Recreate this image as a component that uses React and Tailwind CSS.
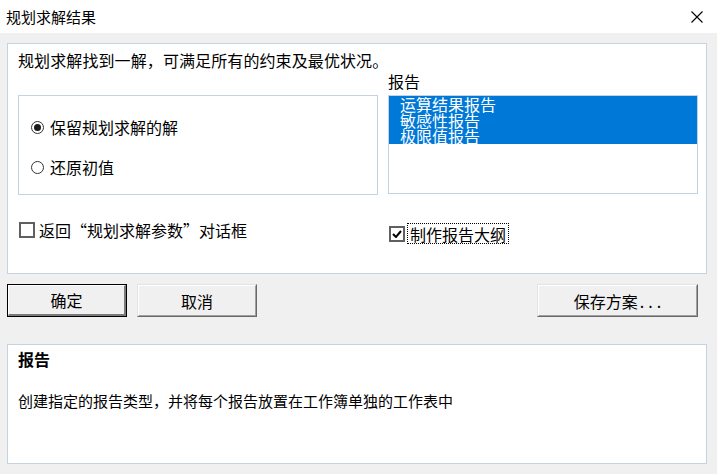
const FONT = "font-['Noto_Sans_CJK_SC','Noto_Sans',sans-serif]";

function Radio({ checked, children }) {
  return (
    <div className="flex items-center h-[16px]">
      <span className="w-[13px] h-[13px] rounded-full border border-[#333] bg-white flex items-center justify-center">
        {checked && <span className="w-[7px] h-[7px] rounded-full bg-[#1a1a1a]" />}
      </span>
      <span className="ml-[6px] text-[16px] leading-[16px]">{children}</span>
    </div>
  );
}

function Checkbox({ checked }) {
  return (
    <span className="w-[16px] h-[16px] border-2 border-[#606060] bg-white flex items-center justify-center shrink-0">
      {checked && (
        <svg width="10" height="8" viewBox="0 0 10 8">
          <path d="M1 4 L4 7 L9 1" stroke="#000" strokeWidth="2" fill="none" />
        </svg>
      )}
    </span>
  );
}

function Btn({ children, isDefault, className = '' }) {
  if (isDefault) {
    return (
      <div className={`h-[33px] flex border border-black ${className}`}>
        <div className="flex-1 flex items-center justify-center bg-[#f0f0f0] border-t border-l border-t-white border-l-white border-b-2 border-r-2 border-b-[#7a7a7a] border-r-[#7a7a7a] text-[16px] leading-[16px]">
          {children}
        </div>
      </div>
    );
  }
  return (
    <div className={`h-[33px] flex border border-t-[#e3e3e3] border-l-[#e3e3e3] border-b-[#696969] border-r-[#696969] ${className}`}>
      <div className="flex-1 flex items-center justify-center bg-[#f0f0f0] border border-t-white border-l-white border-b-[#a0a0a0] border-r-[#a0a0a0] text-[16px] leading-[16px]">
        {children}
      </div>
    </div>
  );
}

export default function App() {
  return (
    <div className={`w-[717px] h-[474px] bg-[#f0f0f0] text-black overflow-hidden ${FONT}`}>
      {/* Title bar */}
      <div className="h-[33px] bg-white flex items-center justify-between pl-[6px] pr-[14px]">
        <span className="text-[15px] leading-[15px]">规划求解结果</span>
        <svg width="12" height="12" viewBox="0 0 12 12">
          <path d="M0.5 0.5 L11.5 11.5 M11.5 0.5 L0.5 11.5" stroke="#000" strokeWidth="1.1" />
        </svg>
      </div>

      <div className="pl-[7px] pr-[10px] pt-[10px]">
        {/* Main panel */}
        <div className="h-[231px] bg-white border border-[#c3d3e3] pl-[10px]">
          <p className="mt-[8px] text-[16px] leading-[16px] tracking-[0.1px]">规划求解找到一解，可满足所有的约束及最优状况。</p>

          <div className="flex items-start gap-[10px] mt-[5px]">
            <div className="w-[360px] h-[100px] mt-[22px] border border-[#c3d3e3] pl-[12px] pt-[23px] flex flex-col gap-[24px]">
              <Radio checked>保留规划求解的解</Radio>
              <Radio>还原初值</Radio>
            </div>
            <div className="w-[310px]">
              <div className="text-[16px] leading-[16px]">报告</div>
              <div className="mt-[6px] h-[99px] border border-[#c3d3e3] bg-white">
                <div className="bg-[#0078d7] text-white pl-[11px] text-[16px] leading-[16px]">
                  <div>运算结果报告</div>
                  <div>敏感性报告</div>
                  <div>极限值报告</div>
                </div>
              </div>
            </div>
          </div>

          <div className="flex items-start mt-[27px]">
            <div className="w-[370px] flex items-center ml-[1px]">
              <Checkbox />
              <span className="ml-[4px] text-[16px] leading-[16px]">返回“规划求解参数”对话框</span>
            </div>
            <div className="flex items-center mt-[1px]">
              <Checkbox checked />
              <span className="ml-[2px] h-[21px] px-[2px] flex items-center border border-dotted border-black text-[16px] leading-[16px]">
                制作报告大纲
              </span>
            </div>
          </div>
        </div>

        {/* Buttons */}
        <div className="flex mt-[10px]">
          <Btn isDefault className="w-[120px]">确定</Btn>
          <Btn className="w-[120px] ml-[10px]">取消</Btn>
          <Btn className="w-[161px] ml-auto mr-[9px]">
            保存方案<span className="tracking-[4px] pl-[2px] -mr-[4px]">...</span>
          </Btn>
        </div>

        {/* Description */}
        <div className="mt-[27px] h-[120px] bg-white border border-[#c3d3e3] pl-[10px] pt-[6px]">
          <div className="text-[16px] leading-[16px] font-bold">报告</div>
          <p className="mt-[26px] text-[15px] leading-[15px]">创建指定的报告类型，并将每个报告放置在工作簿单独的工作表中</p>
        </div>
      </div>
    </div>
  );
}
